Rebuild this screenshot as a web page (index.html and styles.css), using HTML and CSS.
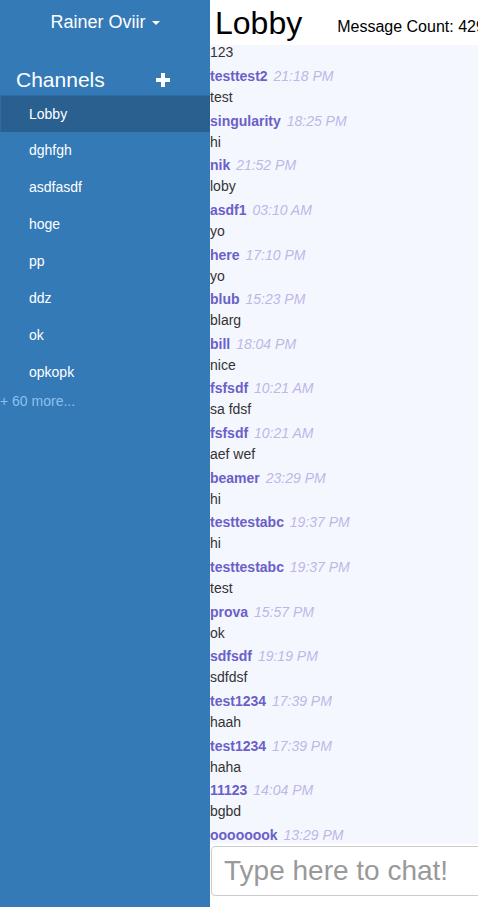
FILE: index.html
```html
<!DOCTYPE html>
<html>
<head>
<meta charset="utf-8">
<link rel="stylesheet" href="styles.css">
</head>
<body>
<div class="app">
  <aside class="sidebar">
    <div class="user">Rainer Oviir <span class="caret"></span></div>
    <div class="channels-head">
      <span class="channels-title">Channels</span>
      <svg class="plus" width="14" height="14" viewBox="0 0 14 14"><path d="M5 0h4v5h5v4H9v5H5V9H0V5h5z" fill="#fff"/></svg>
    </div>
    <ul class="channel-list">
      <li class="channel active">Lobby</li>
      <li class="channel">dghfgh</li>
      <li class="channel">asdfasdf</li>
      <li class="channel">hoge</li>
      <li class="channel">pp</li>
      <li class="channel">ddz</li>
      <li class="channel">ok</li>
      <li class="channel">opkopk</li>
    </ul>
    <div class="more">+ 60 more...</div>
  </aside>
  <main class="chat">
    <header class="chat-head">
      <h1 class="room">Lobby</h1>
      <span class="count">Message Count: 429</span>
    </header>
    <div class="messages">
      <div class="msg first"><div class="text">123</div></div>
      <div class="msg"><div class="meta"><b class="name">testtest2</b> <i class="time">21:18 PM</i></div><div class="text">test</div></div>
      <div class="msg"><div class="meta"><b class="name">singularity</b> <i class="time">18:25 PM</i></div><div class="text">hi</div></div>
      <div class="msg"><div class="meta"><b class="name">nik</b> <i class="time">21:52 PM</i></div><div class="text">loby</div></div>
      <div class="msg"><div class="meta"><b class="name">asdf1</b> <i class="time">03:10 AM</i></div><div class="text">yo</div></div>
      <div class="msg"><div class="meta"><b class="name">here</b> <i class="time">17:10 PM</i></div><div class="text">yo</div></div>
      <div class="msg"><div class="meta"><b class="name">blub</b> <i class="time">15:23 PM</i></div><div class="text">blarg</div></div>
      <div class="msg"><div class="meta"><b class="name">bill</b> <i class="time">18:04 PM</i></div><div class="text">nice</div></div>
      <div class="msg"><div class="meta"><b class="name">fsfsdf</b> <i class="time">10:21 AM</i></div><div class="text">sa fdsf</div></div>
      <div class="msg"><div class="meta"><b class="name">fsfsdf</b> <i class="time">10:21 AM</i></div><div class="text">aef wef</div></div>
      <div class="msg"><div class="meta"><b class="name">beamer</b> <i class="time">23:29 PM</i></div><div class="text">hi</div></div>
      <div class="msg"><div class="meta"><b class="name">testtestabc</b> <i class="time">19:37 PM</i></div><div class="text">hi</div></div>
      <div class="msg"><div class="meta"><b class="name">testtestabc</b> <i class="time">19:37 PM</i></div><div class="text">test</div></div>
      <div class="msg"><div class="meta"><b class="name">prova</b> <i class="time">15:57 PM</i></div><div class="text">ok</div></div>
      <div class="msg"><div class="meta"><b class="name">sdfsdf</b> <i class="time">19:19 PM</i></div><div class="text">sdfdsf</div></div>
      <div class="msg"><div class="meta"><b class="name">test1234</b> <i class="time">17:39 PM</i></div><div class="text">haah</div></div>
      <div class="msg"><div class="meta"><b class="name">test1234</b> <i class="time">17:39 PM</i></div><div class="text">haha</div></div>
      <div class="msg"><div class="meta"><b class="name">11123</b> <i class="time">14:04 PM</i></div><div class="text">bgbd</div></div>
      <div class="msg"><div class="meta"><b class="name">oooooook</b> <i class="time">13:29 PM</i></div><div class="text">ok</div></div>
    </div>
    <div class="composer">
      <input class="chat-input" type="text" placeholder="Type here to chat!">
    </div>
  </main>
</div>
</body>
</html>
```
FILE: styles.css
```css
html, body {
  margin: 0;
  padding: 0;
  height: 100%;
  overflow: hidden;
}
body {
  font-family: "Liberation Sans", Arial, sans-serif;
  font-size: 14px;
  line-height: 20px;
  color: #333;
  background: #fff;
}
.app {
  display: flex;
  height: 907px;
}
.sidebar {
  width: 210px;
  flex: 0 0 210px;
  background: #337ab7;
  color: #fff;
}
.user {
  height: 44px;
  line-height: 44px;
  text-align: center;
  font-size: 18px;
}
.caret {
  display: inline-block;
  width: 0;
  height: 0;
  margin-left: 1px;
  vertical-align: middle;
  border-top: 4px solid #fff;
  border-left: 4px solid transparent;
  border-right: 4px solid transparent;
}
.channels-head {
  display: flex;
  align-items: center;
  padding: 24px 0 3px 16px;
  height: 24px;
}
.channels-title {
  font-size: 21px;
  line-height: 24px;
}
.plus {
  margin-left: auto;
  margin-right: 40px;
  display: block;
}
.channel-list {
  list-style: none;
  margin: 0;
  padding: 0;
}
.channel {
  height: 37px;
  line-height: 37px;
  padding-left: 29px;
  box-sizing: border-box;
}
.channel.active {
  background: #2a6090;
  border-top: 1px solid #2e6da4;
  border-left: 1px solid #2e6da4;
  padding-left: 28px;
  line-height: 36px;
}
.more {
  color: #8ec0ee;
  line-height: 20px;
}
.chat {
  flex: 1 1 auto;
  min-width: 0;
  overflow: hidden;
  display: flex;
  flex-direction: column;
  background: #fff;
}
.chat-head {
  height: 45px;
  flex: 0 0 45px;
  display: flex;
  align-items: center;
  white-space: nowrap;
  padding-left: 5px;
}
.room {
  margin: 0;
  font-size: 32px;
  font-weight: normal;
  line-height: 40px;
  color: #000;
}
.count {
  margin-left: 35px;
  font-size: 16px;
  color: #000;
  padding-top: 8px;
}
.messages {
  height: 799px;
  flex: 0 0 799px;
  overflow: hidden;
  background: #f5f7ff;
}
.msg {
  padding-bottom: 3.65px;
}
.msg.first {
  margin-top: -2.65px;
}
.meta {
  height: 20px;
  margin-bottom: 1px;
  white-space: nowrap;
}
.name {
  color: #6a60c8;
  font-weight: bold;
}
.time {
  color: #bcb8e8;
  margin-left: 2px;
}
.text {
  height: 20px;
}
.composer {
  padding: 2px 0 0 1px;
}
.chat-input {
  display: block;
  width: 320px;
  height: 50px;
  box-sizing: border-box;
  border: 1px solid #ccc;
  border-radius: 4px;
  padding: 0 12px;
  font-family: "Liberation Sans", Arial, sans-serif;
  font-size: 28px;
  background: #fff;
  outline: none;
}
.chat-input::placeholder {
  color: #999;
}
```
